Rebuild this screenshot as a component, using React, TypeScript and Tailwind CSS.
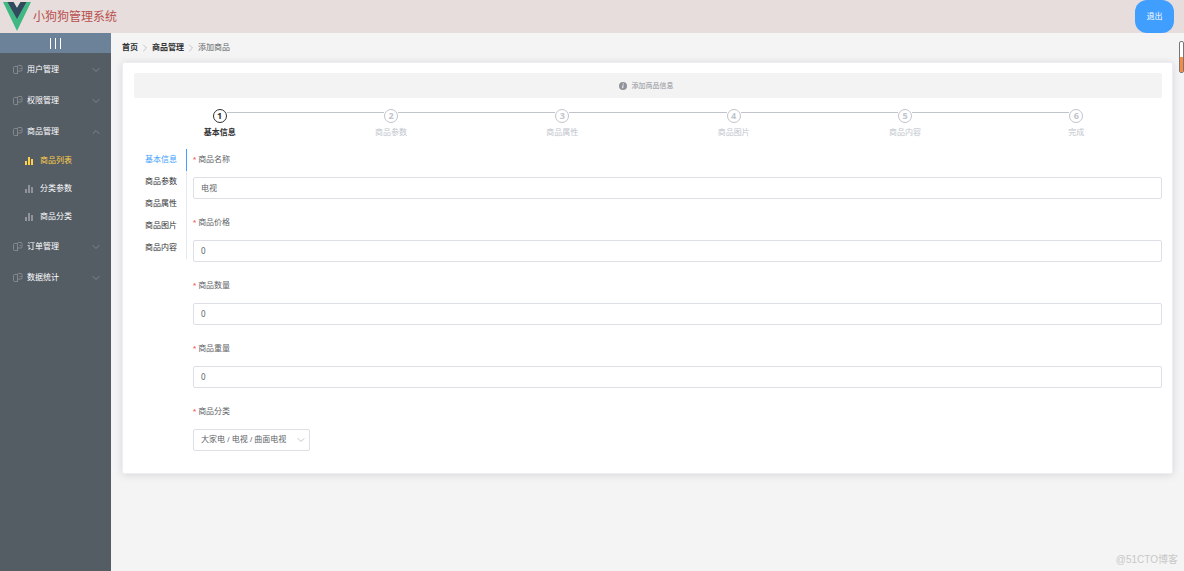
import { ChevronDown, ChevronRight, ChevronUp } from "lucide-react";
import clsx from "clsx";
import { useState } from "react";

const MENUS = [
  { title: "用户管理" },
  { title: "权限管理" },
  { title: "商品管理", children: ["商品列表", "分类参数", "商品分类"] },
  { title: "订单管理" },
  { title: "数据统计" },
];

const STEPS = [
  "基本信息",
  "商品参数",
  "商品属性",
  "商品图片",
  "商品内容",
  "完成",
];

const TABS = STEPS.slice(0, 5);

const FIELDS = [
  { id: "goods_name", label: "商品名称", value: "电视" },
  { id: "goods_price", label: "商品价格", value: "0" },
  { id: "goods_number", label: "商品数量", value: "0" },
  { id: "goods_weight", label: "商品重量", value: "0" },
];

function VueLogo() {
  return (
    <svg viewBox="0 0 28 29" className="h-[29px] w-7 shrink-0">
      <path d="M0 0h10.5L14 6l3.5-6H28L14 29z" fill="#41b883" />
      <path d="M4.5 0h6L14 6l3.5-6h6L14 17z" fill="#35495e" />
    </svg>
  );
}

function MenuIcon() {
  return (
    <svg
      viewBox="0 0 10 10"
      className="size-[10px] shrink-0"
      fill="none"
      stroke="#909399"
      strokeWidth="0.8"
    >
      <path d="M4.5 8.5h-3a1 1 0 0 1-1-1v-5a1 1 0 0 1 1-1h3" />
      <path d="M4.5 9V1.5a1 1 0 0 1 1-1H8a1 1 0 0 1 1 1V5a1 1 0 0 1-1 1H4.500" />
      <path d="M6.5 3.5H8" />
    </svg>
  );
}

function BarsIcon({ active }: { active: boolean }) {
  return (
    <svg
      viewBox="0 0 8 8"
      className="size-2 shrink-0"
      fill={active ? "#ffd04b" : "#909399"}
    >
      <path d="M0 4h2v4H0zM3 0h2v8H3zM6 2h2v6H6z" />
    </svg>
  );
}

function FieldLabel({ id, label }: { id: string; label: string }) {
  return (
    <label htmlFor={id} className="block h-7 leading-[22px] text-[#606266]">
      <span className="mr-[2px] font-bold text-[#f56c6c]">*</span>
      {label}
    </label>
  );
}

function Sidebar() {
  const [active, setActive] = useState("商品列表");

  return (
    <aside className="w-[111px] shrink-0 bg-[#545c64] text-white">
      <button
        aria-label="折叠菜单"
        className="flex h-5 w-full items-center justify-center gap-1 bg-[#6c8299]"
      >
        <span className="h-[11px] w-px bg-white" />
        <span className="h-[11px] w-px bg-white" />
        <span className="h-[11px] w-px bg-white" />
      </button>
      <nav className="pt-px">
        {MENUS.map(({ title, children }) => (
          <div key={title}>
            <button className="flex h-[31px] w-full items-center gap-1 pr-[9px] pl-[13px]">
              <MenuIcon />
              <span className="flex-1 text-left">{title}</span>
              {children ? (
                <ChevronUp className="size-3 text-[#909399]" strokeWidth={1.5} />
              ) : (
                <ChevronDown
                  className="size-3 text-[#909399]"
                  strokeWidth={1.5}
                />
              )}
            </button>
            {children?.map((item) => (
              <a
                key={item}
                href="#"
                onClick={() => setActive(item)}
                className={clsx(
                  "flex h-7 items-center gap-[7px] pl-[25px]",
                  item === active && "text-[#ffd04b]"
                )}
              >
                <BarsIcon active={item === active} />
                {item}
              </a>
            ))}
          </div>
        ))}
      </nav>
    </aside>
  );
}

function Breadcrumb() {
  return (
    <nav className="flex h-[29px] items-center gap-px text-[#606266]">
      <a href="#" className="font-bold text-[#303133]">
        首页
      </a>
      <ChevronRight className="size-3 text-[#c0c4cc]" />
      <a href="#" className="font-bold text-[#303133]">
        商品管理
      </a>
      <ChevronRight className="size-3 text-[#c0c4cc]" />
      <span>添加商品</span>
    </nav>
  );
}

function Steps() {
  return (
    <ol className="mt-[11px] flex">
      {STEPS.map((step, index) => (
        <li
          key={step}
          className={clsx(
            "flex-1 text-center",
            index === 0 ? "font-bold text-[#303133]" : "text-[#c0c4cc]"
          )}
        >
          <div className="flex items-start">
            <span
              className={clsx(
                "mt-[3px] h-px flex-1",
                index > 0 && "bg-[#c0c4cc]"
              )}
            />
            <span className="flex size-[14px] items-center justify-center rounded-full border border-current bg-white font-['Open_Sans',sans-serif] text-[9px] font-bold">
              {index + 1}
            </span>
            <span
              className={clsx(
                "mt-[3px] h-px flex-1",
                index < STEPS.length - 1 && "bg-[#c0c4cc]"
              )}
            />
          </div>
          <p className="mt-[2px] leading-4">{step}</p>
        </li>
      ))}
    </ol>
  );
}

export default function App() {
  const [tab, setTab] = useState(TABS[0]);

  return (
    <div className="relative flex min-h-screen flex-col bg-[#f4f4f4] font-['Liberation_Sans','Noto_Sans_CJK_SC',sans-serif] text-[8px] leading-3">
      <header className="flex h-[33px] items-center justify-between bg-[#e6dddc] pr-[10px] pl-[3px]">
        <div className="flex items-center gap-[2px]">
          <VueLogo />
          <h1 className="text-xs text-[#b9504e]">小狗狗管理系统</h1>
        </div>
        <button className="h-[33px] w-[39px] rounded-xl bg-[#409eff] text-white">
          退出
        </button>
      </header>

      <div className="flex flex-1">
        <Sidebar />
        <main className="min-w-0 flex-1 px-[11px]">
          <Breadcrumb />
          <section className="rounded-xs border border-[#ebeef5] bg-white py-[10px] pr-[10px] pl-[11px] shadow-[0_1px_8px_rgba(0,0,0,0.12)]">
            <div className="flex h-[25px] items-center justify-center gap-[5px] rounded-xs bg-[#f3f3f4] pr-1 text-[7px] text-[#909399]">
              <svg viewBox="0 0 8 8" className="size-2">
                <circle cx="4" cy="4" r="4" fill="#909399" />
                <path
                  d="M4.3 1.5v1M4 3.3L3.7 6.2"
                  stroke="#fff"
                  strokeWidth="1"
                />
              </svg>
              添加商品信息
            </div>

            <Steps />

            <div className="mt-2 flex items-start gap-[6px]">
              <div role="tablist" className="flex w-[53px] shrink-0 flex-col">
                {TABS.map((name) => (
                  <button
                    key={name}
                    role="tab"
                    aria-selected={name === tab}
                    onClick={() => setTab(name)}
                    className={clsx(
                      "h-[22px] border-r pr-[9px] text-right",
                      name === tab
                        ? "border-[#409eff] text-[#409eff]"
                        : "border-[#e4e7ed] text-[#303133]"
                    )}
                  >
                    {name}
                  </button>
                ))}
              </div>

              <form className="min-w-0 flex-1">
                {FIELDS.map(({ id, label, value }) => (
                  <div key={id} className="mb-[13px]">
                    <FieldLabel id={id} label={label} />
                    <input
                      id={id}
                      defaultValue={value}
                      className="block h-[22px] w-full rounded-xs border border-[#dcdfe6] px-[7px] pb-[2px] font-['Noto_Sans','Noto_Sans_CJK_SC',sans-serif] text-[#606266]"
                    />
                  </div>
                ))}
                <div className="mb-3">
                  <FieldLabel id="goods_cat" label="商品分类" />
                  <div className="relative w-[117px]">
                    <select
                      id="goods_cat"
                      className="block h-[22px] w-full appearance-none rounded-xs border border-[#dcdfe6] bg-white px-[7px] text-[#606266]"
                    >
                      <option>大家电 / 电视 / 曲面电视</option>
                    </select>
                    <ChevronDown className="pointer-events-none absolute top-[5px] right-[3px] size-3 text-[#c0c4cc]" />
                  </div>
                </div>
              </form>
            </div>
          </section>
        </main>
      </div>

      <div className="absolute top-[41px] right-0 flex h-8 w-[5px] flex-col justify-end rounded-xs border border-[#777] bg-white">
        <span className="h-1/2 bg-[#f98a45]" />
      </div>
      <span className="absolute right-[6px] bottom-[5px] text-[10px] text-[#c8c8c8]">
        @51CTO博客
      </span>
    </div>
  );
}
